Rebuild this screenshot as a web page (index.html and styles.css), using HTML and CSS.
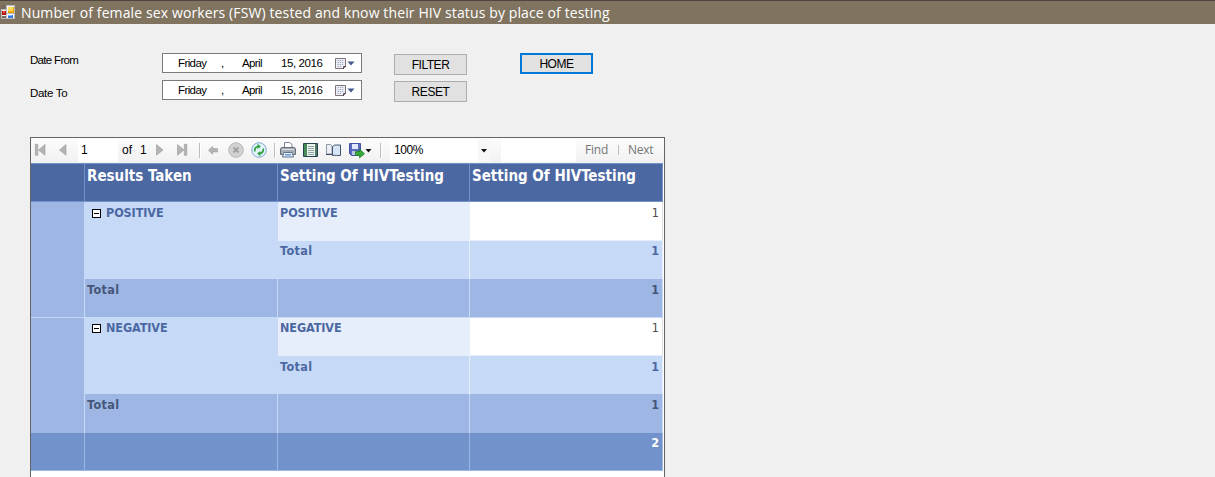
FILE: index.html
```html
<!DOCTYPE html>
<html lang="en">
<head>
<meta charset="utf-8">
<title>Number of female sex workers (FSW) tested</title>
<link rel="stylesheet" href="styles.css">
</head>
<body>
<header class="titlebar">
  <svg class="app-icon" width="15" height="15" viewBox="0 0 15 15" shape-rendering="crispEdges">
    <path fill="#b9b9bd" d="M0 4h5V0h9v14H0z"/>
    <path fill="#f8f5ec" d="M6 1h7v7H6z"/><path fill="#e7a600" d="M7 2h6v6H7z"/><path fill="#ffd95a" d="M7 2h5v4H7z"/>
    <path fill="#eee" d="M1 5h4v6H1z"/><path fill="#b71313" d="M1 6h4v4H1z"/><path fill="#e94b38" d="M2 6h2v2H2z"/>
    <path fill="#776b5f" d="M0 0h5v4H0zM1 11h4v2H1z"/>
    <path fill="#fff" d="M6 9h7v4H6z"/><path fill="#3479de" d="M7 10h5v3H7z"/><path fill="#84b6ff" d="M7 10h4v1H7z"/>
  </svg>
  <h1 class="title">Number of female sex workers (FSW) tested and know their HIV status by place of testing</h1>
</header>

<section class="filters">
  <div class="labels"><label>Date From</label><label>Date To</label></div>
  <div class="dates">
    <div class="date"><span class="weekday">Friday</span><span class="comma">,</span><span class="month">April</span><span class="day">15, 2016</span>
      <svg class="cal" width="22" height="13" viewBox="0 0 22 13"><path d="M1.500 1.500h10v8l-2 2h-8z" fill="#eceef6" stroke="#7f7375"/><path d="M3.500 3.500h6M3.500 5.500h6M3.500 7.500h6M3.500 9.500h4" stroke="#a3abc4" stroke-dasharray="1.300 .9"/><path d="M9.500 12V9.500H12" fill="none" stroke="#594c50"/><path d="M13.500 4.500h7L17 8.500z" fill="#44598c"/></svg></div>
    <div class="date"><span class="weekday">Friday</span><span class="comma">,</span><span class="month">April</span><span class="day">15, 2016</span>
      <svg class="cal" width="22" height="13" viewBox="0 0 22 13"><path d="M1.500 1.500h10v8l-2 2h-8z" fill="#eceef6" stroke="#7f7375"/><path d="M3.500 3.500h6M3.500 5.500h6M3.500 7.500h6M3.500 9.500h4" stroke="#a3abc4" stroke-dasharray="1.300 .9"/><path d="M9.500 12V9.500H12" fill="none" stroke="#594c50"/><path d="M13.500 4.500h7L17 8.500z" fill="#44598c"/></svg></div>
  </div>
  <div class="actions"><button class="btn">FILTER</button><button class="btn">RESET</button></div>
  <button class="btn home">HOME</button>
</section>

<main class="viewer">
  <div class="toolbar">
    <svg class="nav" width="47" height="25" viewBox="0 0 47 25"><g fill="#b4b4b4" stroke="#9b9b9b" stroke-width=".6"><path d="M4.300 6.300h2.500v11H4.300zM14 6.500v10.700L7.500 12zM35 6.500v10.700L28.500 12z"/></g></svg>
    <span class="page">1</span>
    <span class="of">of</span><span class="count">1</span>
    <svg class="nav2" width="132" height="25" viewBox="0 0 132 25">
      <g fill="#b4b4b4" stroke="#9b9b9b" stroke-width=".6"><path d="M8.500 6.500v10.700L15 12zM29.500 6.500v10.700L36 12zM36.300 6.300h2.500v11h-2.500z"/><path d="M60.500 12.300l4-4v2.300h5v3.400h-5v2.300z"/></g>
      <path d="M51.500 5v15" stroke="#bdbdbd"/><path d="M52.500 6v15" stroke="#fff"/>
      <circle cx="88" cy="12" r="7.300" fill="#d2d2d2" stroke="#b8b8b8"/><path d="M85.500 9.500l5 5m0-5l-5 5" stroke="#a0a0a0" stroke-width="1.800"/>
      <circle cx="111" cy="12" r="7.300" fill="#e4f2fb" stroke="#7fa9d2"/>
      <path d="M106.800 13.500c-.5-3 1.200-5 3.500-5M115.200 10.500c.5 3-1.200 5-3.500 5" fill="none" stroke="#2fa33f" stroke-width="1.700"/><path d="M109.500 5.800l3.500 2.700-3.500 2.600zM112.500 12.900l-3.500 2.600 3.500 2.700z" fill="#2fa33f"/>
      <path d="M126.500 5v15" stroke="#bdbdbd"/><path d="M127.500 6v15" stroke="#fff"/>
    </svg>
    <svg class="tools" width="108" height="25" viewBox="0 0 108 25">
      <path d="M5.500 10V4.500h5l2.500 2V10" fill="#fff" stroke="#78869b"/><path d="M2.500 9.500h13l1 1.500v5.500h-15V11z" fill="#a6acb4" stroke="#6a7078"/><path d="M3 11.500h12" stroke="#d9dee4"/><path d="M5 14.500h8l1.500 4.500h-11z" fill="#e9f4ff" stroke="#617389"/><path d="M6 16.800h6" stroke="#5c9bd6" stroke-width="1.500"/>
      <path d="M24.500 5.500h14v13h-14z" fill="#edf6e9" stroke="#27434f"/><path d="M25 6h3v12h-3z" fill="#478b5a"/><path d="M36 6h2v12h-2z" fill="#517b67"/><path d="M29 8.500h6M29 10.500h6M29 12.500h6M29 14.500h6M29 16.500h6" stroke="#8fa5ad"/>
      <path d="M47.500 6.500h4l1.500 1.500v8h-5.500z" fill="#edf1f7" stroke="#8d98a6"/><path d="M47 16.500h6l1.500 1" fill="none" stroke="#36475d"/><path d="M53.500 17.500v-9q2-2 4-1.500h4v10.500h-4q-2-.5-4 0z" fill="#d5e5f7" stroke="#46566b"/>
      <path d="M70.500 5.500h11v12h-9l-2-2z" fill="#5a6abf" stroke="#4453a6"/><path d="M73 6h6v5h-6z" fill="#e2e8fa"/><path d="M73 13h5v4h-5z" fill="#b9c6e3"/><path d="M76.500 13.500h4v-2.500l5 4.700-5 4.300v-2.500h-4z" fill="#36a836" stroke="#187d26" stroke-width=".7"/>
      <path d="M86.500 11h6l-3 3.500z" fill="#111"/><path d="M101.500 5v15" stroke="#bdbdbd"/><path d="M102.500 6v15" stroke="#fff"/>
    </svg>
    <div class="zoom"><span>100%</span><svg width="12" height="23" viewBox="0 0 12 23"><path d="M0 0h12v23H0z" fill="#f8f8f8"/><path d="M3 10h6l-3 3.500z" fill="#111"/></svg></div>
    <span class="search"></span>
    <span class="find">Find</span><span class="bar"></span><span class="next">Next</span>
  </div>
  <div class="report">
    <div class="c head"></div><div class="c head">Results Taken</div><div class="c head">Setting Of HIVTesting</div><div class="c head">Setting Of HIVTesting</div>
    <div class="c outer"></div>
    <div class="c group"><i class="toggle"></i>POSITIVE</div>
    <div class="c item">POSITIVE</div><div class="c value">1</div>
    <div class="c sub raised">Total</div><div class="c sub num raised">1</div>
    <div class="c total">Total</div><div class="c total"></div><div class="c total num">1</div>
    <div class="c outer"></div>
    <div class="c group raised"><i class="toggle"></i>NEGATIVE</div>
    <div class="c item raised">NEGATIVE</div><div class="c value raised">1</div>
    <div class="c sub">Total</div><div class="c sub num">1</div>
    <div class="c total">Total</div><div class="c total"></div><div class="c total num">1</div>
    <div class="c grand"></div><div class="c grand"></div><div class="c grand"></div><div class="c grand num raised">2</div>
  </div>
</main>
</body>
</html>
```
FILE: styles.css
```css
* { box-sizing: border-box; }
body { margin: 0; height: 477px; overflow: hidden; background: #f0f0f0; color: #000; font: 12px/14px "Liberation Sans", Arial, sans-serif; }
.titlebar { height: 24px; background: #807460; border-top: 1px solid #51463f; display: flex; align-items: flex-start; }
.app-icon { margin: 4px 0 0 1px; flex: none; }
.title { margin: 2px 0 0 5px; font: 400 14px/20px "Open Sans", "Noto Sans", sans-serif; letter-spacing: .116px; color: #fff; white-space: nowrap; }

.filters { display: flex; height: 113px; padding: 29px 0 0 30px; align-items: flex-start; }
.labels { width: 132px; display: flex; flex-direction: column; gap: 19px; font-size: 11.500px; letter-spacing: -.68px; }
.labels label:last-child { letter-spacing: -.3px; }
.dates { width: 200px; display: flex; flex-direction: column; gap: 7px; }
.date { height: 20px; background: #fff; border: 1px solid #7a7a7a; display: flex; align-items: center; padding-left: 15px; font-size: 11.500px; letter-spacing: -.4px; }
.weekday { width: 43px; letter-spacing: -.6px; }
.comma { width: 21px; }
.month { width: 39px; letter-spacing: -.6px; }
.day { width: 53px; white-space: nowrap; }
.cal { flex: none; }
.actions { margin: 1px 0 0 32px; display: flex; flex-direction: column; gap: 6px; }
.btn { width: 73px; height: 21px; padding: 1px 0 0; border: 1px solid #adadad; background: #e1e1e1; font: 12px/18px "Liberation Sans", Arial, sans-serif; letter-spacing: -.45px; color: #000; }
.home { margin-left: 53px; border: 2px solid #0078d7; line-height: 16px; }

.viewer { margin-left: 30px; width: 635px; height: 342px; border: 1px solid #646464; background: #fff; }
.toolbar { height: 25px; display: flex; align-items: flex-start; background: linear-gradient(#fcfcfc, #f1f1f1); line-height: 25px; overflow: hidden; }
.toolbar svg { flex: none; }
.page { width: 40px; height: 23px; margin-top: 1px; line-height: 23px; background: #fff; padding-left: 3px; }
.of { width: 18px; margin-left: 4px; }
.count { width: 7px; }
.nav2 { margin: 0 -1px 0 1px; }
.zoom { width: 100px; height: 23px; margin: 1px 0 0 3px; background: #fff; display: flex; justify-content: space-between; line-height: 23px; padding-left: 4px; letter-spacing: -.4px; }
.search { width: 75px; height: 23px; margin: 1px 0 0 11px; background: #fff; }
.find, .next { color: #767676; font: 12px/24px "Open Sans", "Noto Sans", sans-serif; }
.find { margin-left: 9px; width: 33px; letter-spacing: -.2px; }
.bar { width: 1px; height: 10px; margin-top: 7px; background: #bdbdbd; }
.next { margin-left: 9px; letter-spacing: -.3px; }

.report { display: grid; grid-template-columns: 54px 193px 192px 193px; grid-template-rows: 39px 39px 38px 39px 38px 38px 39px 38px; font: bold 12.500px/15px "DejaVu Sans Condensed", "DejaVu Sans", sans-serif; font-stretch: condensed; }
.c { padding: 3px 2px; border-right: 1px solid #c6d9f7; white-space: nowrap; }
.head { background: #4c68a2; color: #fff; border-top: 1px solid #7292cc; border-bottom: 1px solid #7292cc; border-right-color: #7292cc; font-size: 15px; line-height: 18px; }
.outer { grid-row: span 3; background: #9eb6e4; border-bottom: 1px solid #c6d9f7; }
.outer ~ .outer { border-bottom-color: #9eb6e4; }
.group { grid-row: span 2; background: #c6d9f7; color: #4c68a2; letter-spacing: -.1px; }
.item { background: #e6eefb; color: #4c68a2; border-right-color: #e6eefb; letter-spacing: -.1px; }
.value { background: #fff; color: #4d4d4d; border-right-color: #e0e0e0; border-bottom: 1px solid #e6eefb; font-weight: 400; text-align: right; padding-right: 3px; }
.sub { background: #c6d9f7; color: #4c68a2; border-right-color: #e6eefb; letter-spacing: .4px; }
.total { background: #9eb6e4; color: #465678; border-bottom: 1px solid #c6d9f7; letter-spacing: .4px; }
.outer ~ .outer ~ .total { border-bottom-color: #9eb6e4; }
.num { text-align: right; padding-right: 3px; letter-spacing: 0; }
.grand { background: #7292cc; color: #fff; border-right-color: #9eb6e4; border-bottom: 1px solid #9eb6e4; }
.raised { padding-top: 2px; }
.toggle { display: inline-block; width: 9px; height: 9px; margin: 0 5px 0 5px; border: 1px solid #000; vertical-align: -1px; background: linear-gradient(#000, #000) center / 5px 1px no-repeat #fff; }
```
